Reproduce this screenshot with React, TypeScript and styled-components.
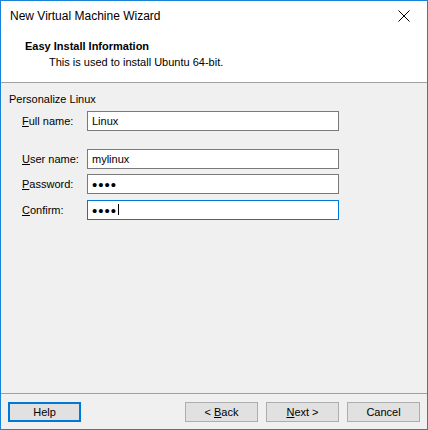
import React from "react";
import styled, { createGlobalStyle } from "styled-components";

const GlobalStyle = createGlobalStyle`
  html, body {
    margin: 0;
    padding: 0;
    background: #ffffff;
  }
  * {
    box-sizing: border-box;
  }
`;

const Window = styled.div`
  width: 428px;
  height: 430px;
  display: flex;
  flex-direction: column;
  border: 1px solid #1883d7;
  background-color: #f0f0f0;
  font-family: "Liberation Sans", Arial, sans-serif;
  font-size: 11px;
  color: #000;
`;

const TitleBar = styled.div`
  display: flex;
  align-items: center;
  justify-content: space-between;
  height: 30px;
  padding-left: 9px;
  background-color: #fff;
`;

const TitleText = styled.span`
  font-size: 12px;
  color: #000;
`;

const CloseButton = styled.div`
  width: 46px;
  height: 30px;
  display: flex;
  align-items: center;
  justify-content: center;
`;

const Header = styled.div`
  height: 52px;
  padding: 8px 0 0 24px;
  background-color: #fff;
  border-bottom: 1px solid #a0a0a0;
`;

const HeaderTitle = styled.div`
  font-weight: bold;
  line-height: 14px;
`;

const HeaderSub = styled.div`
  margin-top: 2px;
  padding-left: 24px;
  line-height: 14px;
`;

const Content = styled.div`
  flex: 1;
  padding: 9px 0 0 8px;
  border-bottom: 1px solid #a0a0a0;
`;

const GroupTitle = styled.div`
  line-height: 14px;
`;

const Form = styled.div`
  display: grid;
  grid-template-columns: 65px 252px;
  grid-template-rows: 20px 6px 19px 20px 20px;
  align-items: center;
  row-gap: 6px;
  padding: 5px 0 0 13px;
`;

const Spacer = styled.div`
  grid-column: 1 / span 2;
`;

const Label = styled.label`
  line-height: 14px;
`;

const Key = styled.span`
  text-decoration: underline;
`;

const FieldWrap = styled.div`
  position: relative;
  width: 252px;
  height: 20px;
`;

const Field = styled.input<{ $focused?: boolean; $secret?: boolean }>`
  display: block;
  height: 20px;
  width: 252px;
  margin: 0;
  padding: 0 4px;
  border: 1px solid ${(p) => (p.$focused ? "#0078d7" : "#7a7a7a")};
  background: #fff;
  font-family: "Liberation Sans", Arial, sans-serif;
  font-size: ${(p) => (p.$secret ? "15px" : "11px")};
  letter-spacing: ${(p) => (p.$secret ? "1px" : "normal")};
  color: #000;
  outline: none;
  caret-color: transparent;
`;

const Caret = styled.span`
  position: absolute;
  left: 31px;
  top: 4px;
  width: 1px;
  height: 11px;
  background: #000;
`;

const Footer = styled.div`
  display: flex;
  align-items: center;
  height: 35px;
  padding: 1px 7px 1px 7px;
`;

const Button = styled.button<{ $default?: boolean }>`
  width: 73px;
  height: 20px;
  margin: 0;
  padding: 0;
  background-color: #e1e1e1;
  border: ${(p) => (p.$default ? "2px solid #0078d7" : "1px solid #adadad")};
  font-family: "Liberation Sans", Arial, sans-serif;
  font-size: 11px;
  color: #000;
  cursor: pointer;
`;

const ButtonGroup = styled.div`
  display: flex;
  gap: 8px;
  margin-left: auto;
`;

const CloseIcon = () => (
  <svg width="12" height="12" viewBox="0 0 12 12">
    <path d="M0.5 0.5 L11.5 11.5 M11.5 0.5 L0.5 11.5" stroke="#000" strokeWidth="1" />
  </svg>
);

export default function App() {
  return (
    <>
      <GlobalStyle />
      <Window>
        <TitleBar>
          <TitleText>New Virtual Machine Wizard</TitleText>
          <CloseButton>
            <CloseIcon />
          </CloseButton>
        </TitleBar>
        <Header>
          <HeaderTitle>Easy Install Information</HeaderTitle>
          <HeaderSub>This is used to install Ubuntu 64-bit.</HeaderSub>
        </Header>
        <Content>
          <GroupTitle>Personalize Linux</GroupTitle>
          <Form>
            <Label>
              <Key>F</Key>ull name:
            </Label>
            <Field type="text" defaultValue="Linux" />
            <Spacer />
            <Label>
              <Key>U</Key>ser name:
            </Label>
            <Field type="text" defaultValue="mylinux" />
            <Label>
              <Key>P</Key>assword:
            </Label>
            <Field type="password" defaultValue="abcd" $secret />
            <Label>
              <Key>C</Key>onfirm:
            </Label>
            <FieldWrap>
              <Field type="password" defaultValue="abcd" $secret $focused />
              <Caret />
            </FieldWrap>
          </Form>
        </Content>
        <Footer>
          <Button $default>Help</Button>
          <ButtonGroup>
            <Button>
              &lt; <Key>B</Key>ack
            </Button>
            <Button>
              <Key>N</Key>ext &gt;
            </Button>
            <Button>Cancel</Button>
          </ButtonGroup>
        </Footer>
      </Window>
    </>
  );
}
